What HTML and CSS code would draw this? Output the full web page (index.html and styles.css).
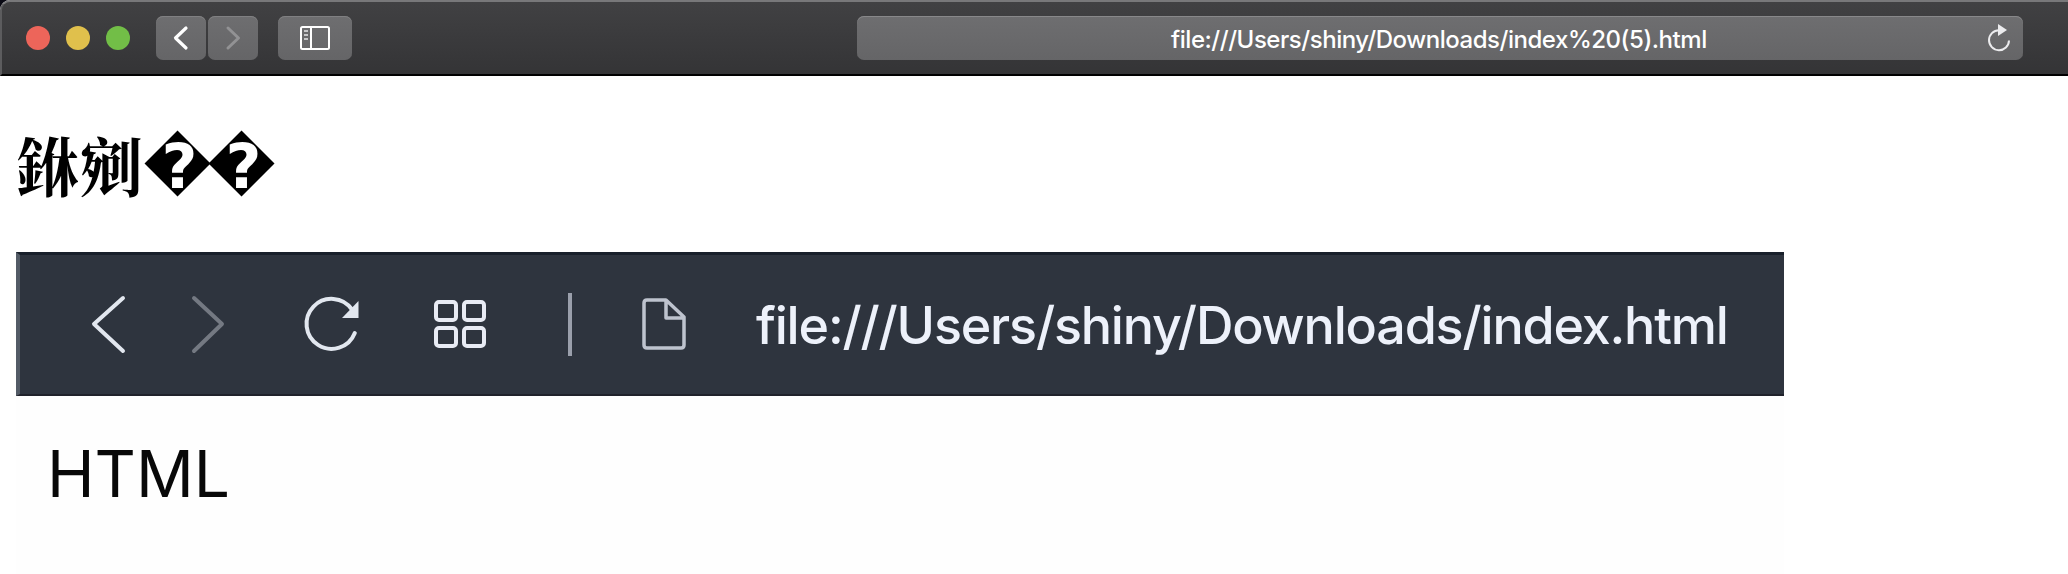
FILE: index.html
```html
<!DOCTYPE html>
<html lang="zh-Hant">
<head>
<meta charset="utf-8">
<title>index (5).html</title>
<link rel="stylesheet" href="styles.css">
</head>
<body>
<header class="toolbar">
  <div class="lights"><span class="light red"></span><span class="light yellow"></span><span class="light green"></span></div>
  <div class="history">
    <button class="btn" aria-label="Back"><svg width="50" height="44"><path d="M30 12 19.5 22 30 32" fill="none" stroke="#fff" stroke-width="3.2" stroke-linecap="round" stroke-linejoin="round"/></svg></button>
    <button class="btn" aria-label="Forward"><svg width="50" height="44"><path d="M20 12 30.5 22 20 32" fill="none" stroke="#929294" stroke-width="3" stroke-linecap="round" stroke-linejoin="round"/></svg></button>
  </div>
  <button class="btn wide" aria-label="Sidebar"><svg width="74" height="44" fill="none" stroke="#fff" stroke-width="2"><rect x="23" y="11" width="28" height="22" rx="1.5"/><path d="M33 11v22"/><path d="M26 15h4M26 19h4M26 23h4" stroke="#c8c8ca"/></svg></button>
  <div class="address">
    <span class="url">file:///Users/shiny/Downloads/index%20(5).html</span>
    <svg class="reload" width="24" height="30" viewBox="0 0 24 30"><path d="M12 6.2A10 10 0 1 0 22 16.5" fill="none" stroke="#ececee" stroke-width="2"/><path d="M11 0v12l9-6z" fill="#ececee"/></svg>
  </div>
</header>
<main class="page">
  <h1 class="title"><span class="han">銝剜</span><span class="bad">�</span><span class="bad">�</span></h1>
  <section class="shot">
    <div class="bar">
      <svg class="icons" width="724" height="144" fill="none" stroke="#e2e7ef" stroke-width="4">
        <path d="M107 46 78 72 107 99" stroke-linecap="round" stroke-linejoin="round"/>
        <path d="M178 46 206 72 178 99" stroke="#747982" stroke-linecap="round" stroke-linejoin="round"/>
        <path d="M338.800 81A25 25 0 1 1 336 57.500" stroke-linecap="round"/>
        <path d="M342.500 49v17H326z" fill="#e2e7ef" stroke="none"/>
        <g stroke="#e8ebf4"><rect x="420" y="50" width="20" height="18" rx="3"/><rect x="448" y="50" width="20" height="18" rx="3"/><rect x="420" y="76" width="20" height="18" rx="3"/><rect x="448" y="76" width="20" height="18" rx="3"/></g>
        <path d="M554 41v63" stroke="#9a9fab"/>
        <path d="M631 48H650L668 65V93Q668 96 665 96H631Q628 96 628 93V51Q628 48 631 48ZM650 48V66H668" stroke="#bec3ce" stroke-width="3.500" stroke-linejoin="round"/>
      </svg>
      <span class="path">file:///Users/shiny/Downloads/index.html</span>
    </div>
    <p class="html">HTML</p>
  </section>
</main>
</body>
</html>
```
FILE: styles.css
```css
* { box-sizing: border-box; }
body { margin: 0; height: 574px; overflow: hidden; background: #fff; font-family: Inter, "Liberation Sans", sans-serif; }
svg { display: block; flex: none; }
.toolbar { height: 76px; padding: 14px 45px 0 24px; display: flex; align-items: flex-start; background: linear-gradient(#414143, #343436); border-top: 2px solid #78787a; border-bottom: 2px solid #000; border-left: 2px solid #5c5c5e; border-top-left-radius: 10px; box-shadow: -5px -5px #0a0a14; }
.lights { display: flex; gap: 16px; padding-top: 10px; width: 130px; }
.light { width: 24px; height: 24px; border-radius: 50%; }
.red { background: #ed655a; }
.yellow { background: #e0c04c; }
.green { background: #72be47; }
.history { display: flex; gap: 2px; }
.btn { width: 50px; height: 44px; padding: 0; border: 0; border-radius: 7px; background: linear-gradient(#6e6e70, #656567); box-shadow: inset 0 1px #808082; }
.wide { width: 74px; margin-left: 20px; }
.address { flex: 1; margin-left: 505px; height: 44px; border-radius: 7px; display: flex; padding-right: 12px; background: linear-gradient(#6e6e70, #656567); box-shadow: inset 0 1px #88888a; }
.url { flex: 1; padding-left: 314px; font-size: 24px; line-height: 47px; letter-spacing: -0.46px; font-weight: 500; color: #fff; white-space: nowrap; }
.reload { margin-top: 8px; }
.page { padding: 42px 16px 0; }
.title { margin: 0; height: 134px; display: flex; font-size: 64px; line-height: 92px; font-weight: 700; color: #000; white-space: nowrap; }
.han { width: 127px; font-family: "Noto Serif CJK TC", "Noto Sans CJK TC", serif; font-size: 63.5px; }
.bad { width: 64px; font-family: "DejaVu Sans", sans-serif; font-size: 62px; line-height: 98px; }
.shot { width: 1768px; height: 322px; background: #fefefe; }
.bar { height: 144px; display: flex; background: #2e343e; border-top: 3px solid #19202b; border-bottom: 2px solid #20222b; border-left: 4px solid #535b66; }
.icons { margin: -3px 16px 0 -4px; }
.path { line-height: 141px; font-size: 52px; letter-spacing: -1.18px; font-weight: 500; color: #edf1fa; white-space: nowrap; }
.html { margin: 0; padding: 40px 0 0 31px; font-size: 64px; line-height: 75px; color: #080808; }
```
